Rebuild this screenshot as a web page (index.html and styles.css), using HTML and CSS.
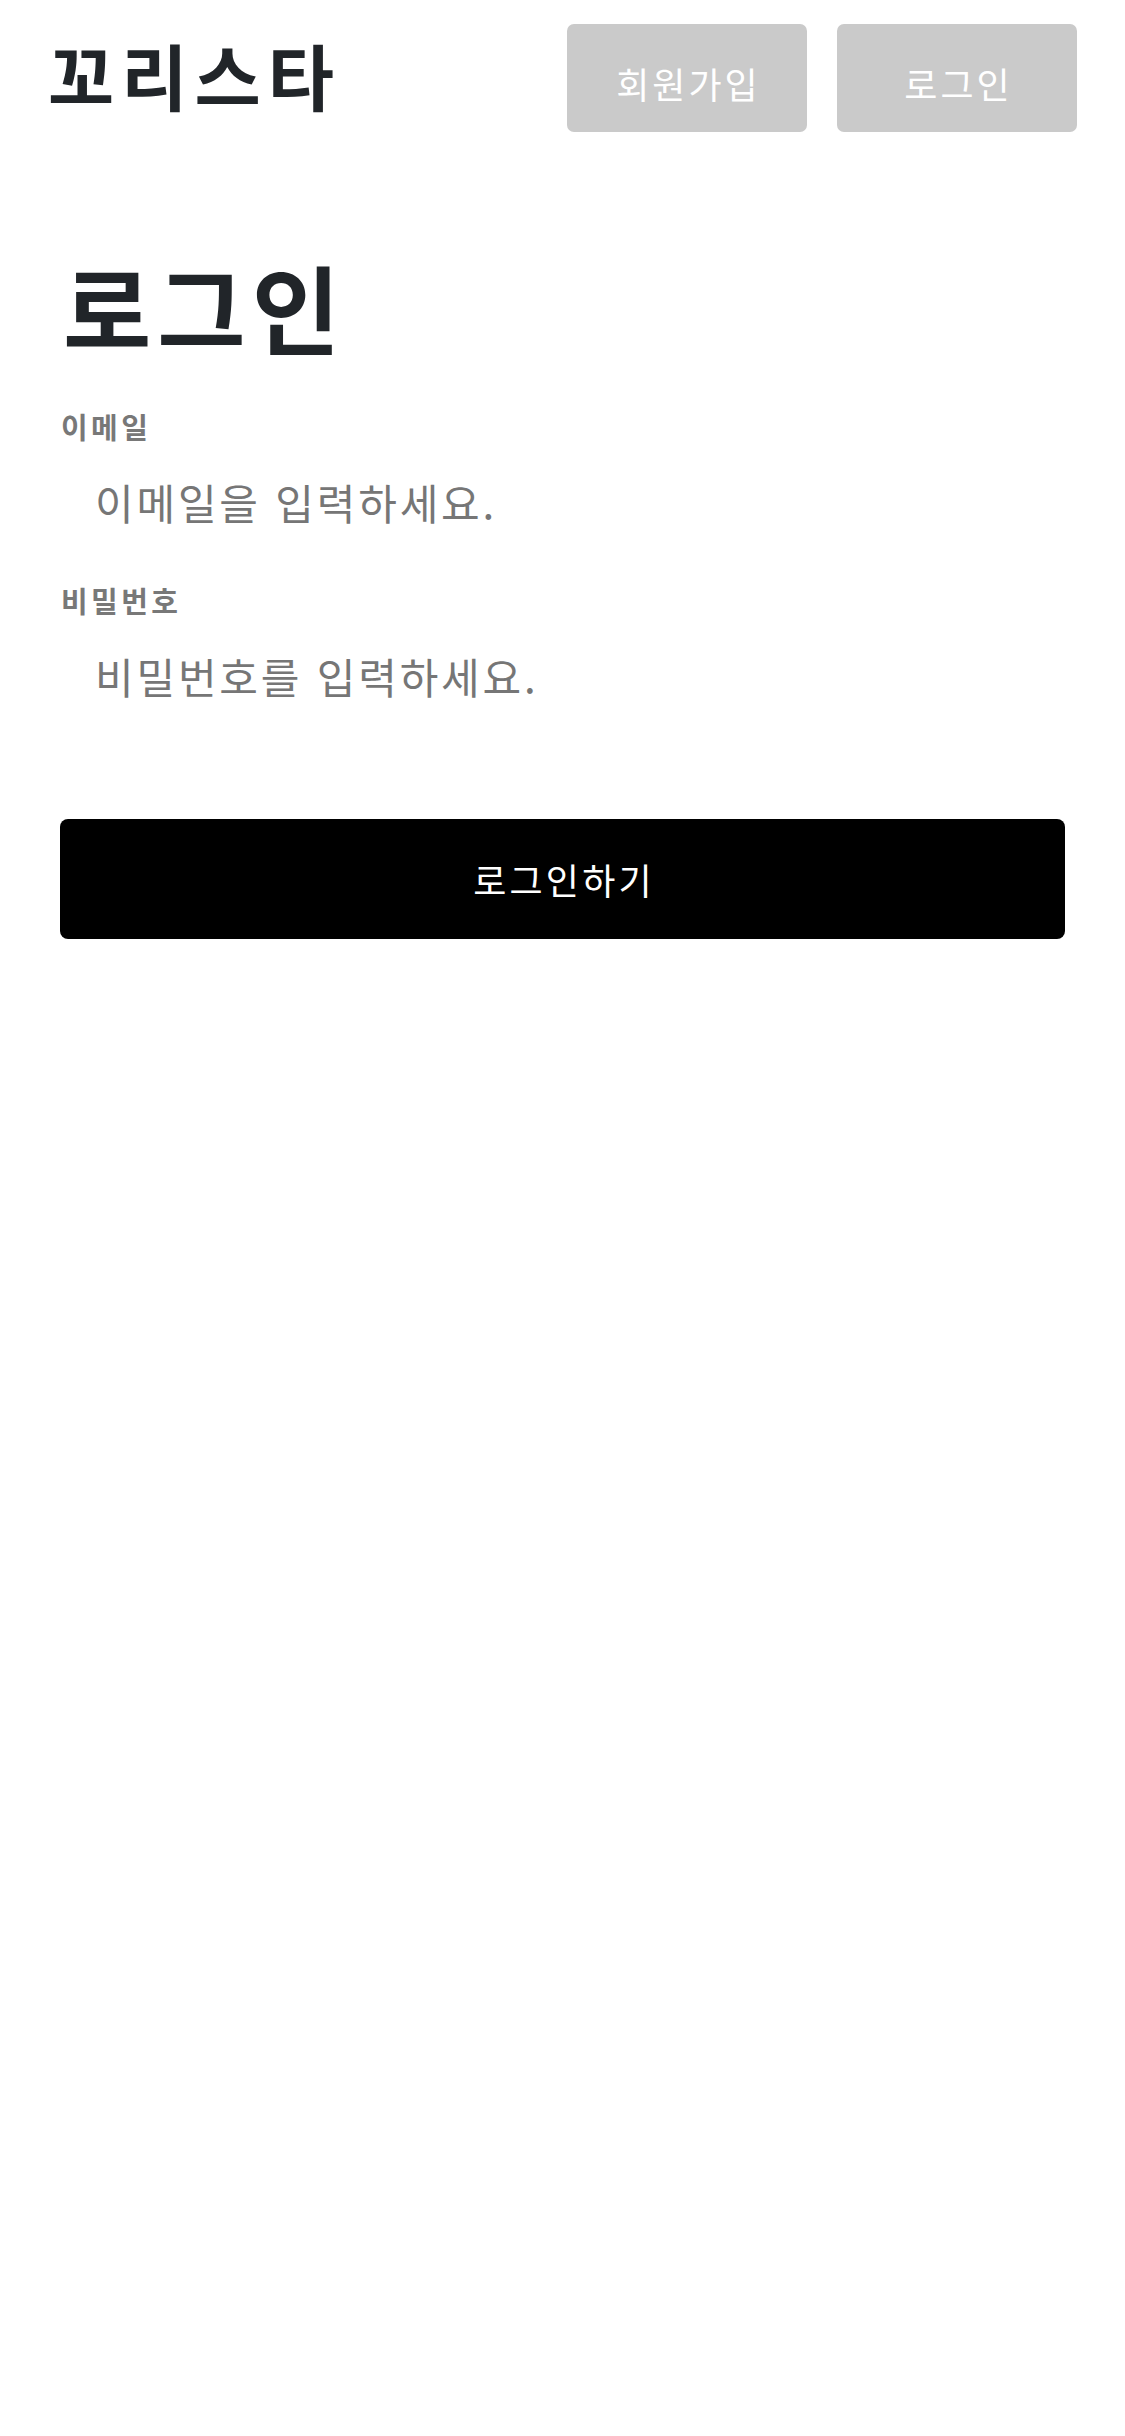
FILE: index.html
```html
<!doctype html>
<html lang="ko">
<head>
    <meta charset="UTF-8">
    <meta name="viewport" content="width=device-width, initial-scale=1.0">
    <title>꼬리스타 - 로그인</title>
    <link rel="stylesheet" href="styles.css">
</head>
<body>
<header class="header">
    <div class="logo">꼬리스타</div>
    <nav class="nav">
        <button type="button" class="nav-btn">회원가입</button>
        <button type="button" class="nav-btn">로그인</button>
    </nav>
</header>
<main class="main">
    <h1 class="title">로그인</h1>
    <form class="login-form">
        <div class="field">
            <label class="field-label" for="email">이메일</label>
            <input class="field-input" id="email" type="email" placeholder="이메일을 입력하세요.">
        </div>
        <div class="field">
            <label class="field-label" for="password">비밀번호</label>
            <input class="field-input" id="password" type="password" placeholder="비밀번호를 입력하세요.">
        </div>
        <button type="submit" class="submit-btn">로그인하기</button>
    </form>
</main>
</body>
</html>
```

FILE: styles.css
```css
*{
    padding: 0;
    margin: 0;
    box-sizing: border-box;
}
body{
    font-family: "Noto Sans CJK KR", "Noto Sans CJK JP", sans-serif;
    background-color: #fff;
    color: #212529;
}
.header{
    display: flex;
    justify-content: space-between;
    align-items: flex-start;
    padding: 24px 48px 0 48px;
}
.logo{
    margin-top: 14px;
    font-size: 72px;
    line-height: 1;
    font-weight: 700;
    letter-spacing: 7px;
    color: #212529;
}
.nav{
    display: flex;
    gap: 30px;
}
.nav-btn{
    display: flex;
    justify-content: center;
    align-items: center;
    width: 240px;
    height: 108px;
    padding: 9px 0 0 3px;
    border: none;
    border-radius: 7px;
    background-color: #cacaca;
    color: #fff;
    font-family: inherit;
    font-size: 36px;
    line-height: 1;
    letter-spacing: 3px;
}
.main{
    padding: 0 60px;
}
.title{
    margin-top: 126px;
    padding-left: 3px;
    font-size: 96px;
    line-height: 1;
    font-weight: 700;
    letter-spacing: 6px;
    color: #212529;
}
.login-form{
    display: flex;
    flex-direction: column;
}
.field{
    display: flex;
    flex-direction: column;
    margin-top: 55px;
}
.field:first-child{
    margin-top: 58px;
}
.field-label{
    padding-left: 1px;
    font-size: 29px;
    line-height: 1;
    font-weight: 700;
    letter-spacing: 3.4px;
    color: #787878;
    margin-bottom: 30px;
}
.field-input{
    width: 100%;
    height: 60px;
    padding: 0 0 0 35px;
    border: none;
    outline: none;
    background: transparent;
    font-family: inherit;
    font-size: 42px;
    line-height: 42px;
    letter-spacing: 2.8px;
    color: #212529;
}
.field-input::placeholder{
    color: #767676;
}
.submit-btn{
    display: flex;
    justify-content: center;
    align-items: center;
    width: 100%;
    height: 120px;
    margin-top: 114px;
    padding-left: 3px;
    border: none;
    border-radius: 8px;
    background-color: #000;
    color: #fff;
    font-family: inherit;
    font-size: 36px;
    line-height: 1;
    letter-spacing: 3.2px;
}
```
